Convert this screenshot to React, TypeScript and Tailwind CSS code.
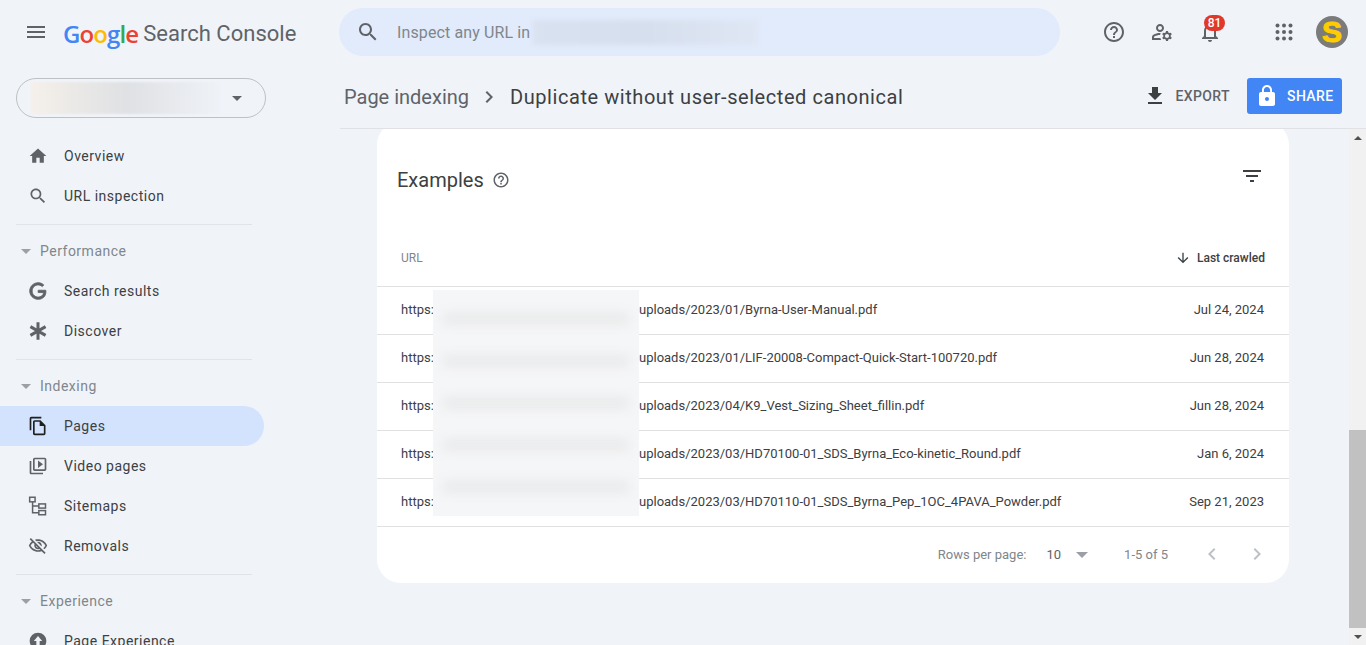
import React from "react";

const P = {
  menu: "M3 18h18v-2H3v2zm0-5h18v-2H3v2zm0-7v2h18V6H3z",
  home: "M10 20v-6h4v6h5v-8h3L12 3 2 12h3v8z",
  search: "M15.5 14h-.79l-.28-.27C15.41 12.59 16 11.11 16 9.5 16 5.91 13.09 3 9.5 3S3 5.91 3 9.5 5.91 16 9.5 16c1.61 0 3.09-.59 4.23-1.57l.27.28v.79l5 4.99L20.49 19l-4.99-5zm-6 0C7.01 14 5 11.99 5 9.5S7.01 5 9.5 5 14 7.01 14 9.5 11.99 14 9.5 14z",
  help: "M11 18h2v-2h-2v2zm1-16C6.48 2 2 6.48 2 12s4.48 10 10 10 10-4.48 10-10S17.52 2 12 2zm0 18c-4.41 0-8-3.59-8-8s3.59-8 8-8 8 3.59 8 8-3.59 8-8 8zm0-14c-2.21 0-4 1.79-4 4h2c0-1.1.9-2 2-2s2 .9 2 2c0 2-3 1.75-3 5h2c0-2.25 3-2.5 3-5 0-2.21-1.79-4-4-4z",
  bell: "M12 22c1.1 0 2-.9 2-2h-4c0 1.1.9 2 2 2zm6-6v-5c0-3.07-1.63-5.64-4.5-6.32V4c0-.83-.67-1.5-1.5-1.5s-1.5.67-1.5 1.5v.68C7.64 5.36 6 7.92 6 11v5l-2 2v1h16v-1l-2-2zm-2 1H8v-6c0-2.48 1.51-4.5 4-4.5s4 2.02 4 4.5v6z",
  download: "M19 9h-4V3H9v6H5l7 7 7-7zM5 18v2h14v-2H5z",
  lock: "M18 8h-1V6c0-2.76-2.24-5-5-5S7 3.24 7 6v2H6c-1.1 0-2 .9-2 2v10c0 1.1.9 2 2 2h12c1.1 0 2-.9 2-2V10c0-1.1-.9-2-2-2zm-6 9c-1.1 0-2-.9-2-2s.9-2 2-2 2 .9 2 2-.9 2-2 2zm3.1-9H8.9V6c0-1.71 1.39-3.1 3.1-3.1 1.71 0 3.1 1.39 3.1 3.1v2z",
  filter: "M10 18h4v-2h-4v2zM3 6v2h18V6H3zm3 7h12v-2H6v2z",
  down: "M20 12l-1.41-1.41L13 16.17V4h-2v12.17l-5.58-5.59L4 12l8 8 8-8z",
  left: "M15.41 7.41L14 6l-6 6 6 6 1.41-1.41L10.83 12z",
  right: "M10 6L8.59 7.41 13.17 12l-4.58 4.59L10 18l6-6z",
  eyeOff: "M12 6c3.79 0 7.17 2.13 8.82 5.5-.59 1.22-1.42 2.27-2.41 3.12l1.41 1.41c1.39-1.23 2.49-2.77 3.18-4.53C21.27 7.11 17 4 12 4c-1.27 0-2.49.2-3.64.57l1.65 1.65C10.66 6.09 11.32 6 12 6zm-1.07 1.14L13 9.21c.57.25 1.03.71 1.28 1.28l2.07 2.07c.08-.34.14-.7.14-1.07C16.5 9.01 14.48 7 12 7c-.37 0-.72.05-1.07.14zM2.01 3.87l2.68 2.68C3.06 7.83 1.77 9.53 1 11.5 2.73 15.89 7 19 12 19c1.52 0 2.98-.29 4.32-.82l3.42 3.42 1.41-1.41L3.42 2.45 2.01 3.87zm7.5 7.5l2.61 2.61c-.04.01-.08.02-.12.02-1.38 0-2.5-1.12-2.5-2.5 0-.05.01-.08.01-.13zm-3.4-3.4l1.75 1.75c-.23.55-.36 1.15-.36 1.78 0 2.48 2.02 4.5 4.5 4.5.63 0 1.23-.13 1.77-.36l.98.98c-.88.24-1.8.38-2.75.38-3.79 0-7.17-2.13-8.82-5.5.7-1.43 1.72-2.61 2.93-3.53z",
  pages: "M16 1H4c-1.1 0-2 .9-2 2v14h2V3h12V1zm-1 4H8c-1.1 0-1.99.9-1.99 2L6 21c0 1.1.89 2 1.99 2H19c1.1 0 2-.9 2-2V11l-6-6zM8 21V7h6v5h5v9H8z",
  video: "M4 6H2v14c0 1.1.9 2 2 2h14v-2H4V6zm16-4H8c-1.1 0-2 .9-2 2v12c0 1.1.9 2 2 2h12c1.1 0 2-.9 2-2V4c0-1.1-.9-2-2-2zm0 14H8V4h12v12zM12 5.5v9l6-4.5z",
  g: "M21.35 11.1h-9.17v2.73h6.51c-.33 3.81-3.5 5.44-6.5 5.44C8.36 19.27 5 16.25 5 12c0-4.1 3.2-7.27 7.2-7.27 3.09 0 4.9 1.97 4.9 1.97L19 4.72S16.56 2 12.1 2C6.42 2 2.03 6.8 2.03 12c0 5.05 4.13 10 10.22 10 5.35 0 9.25-3.67 9.25-9.09 0-1.15-.15-1.81-.15-1.81z",
  manage: "M4 18v-.65c0-.34.16-.66.41-.81C6.1 15.53 8.03 15 10 15c.03 0 .05 0 .08.01.1-.7.3-1.37.59-1.98-.22-.02-.44-.03-.67-.03-2.42 0-4.68.67-6.61 1.82-.88.52-1.39 1.5-1.39 2.53V20h9.26c-.42-.6-.75-1.28-.97-2H4zM10 12c2.21 0 4-1.79 4-4s-1.79-4-4-4-4 1.79-4 4 1.79 4 4 4zm0-6c1.1 0 2 .9 2 2s-.9 2-2 2-2-.9-2-2 .9-2 2-2zM20.75 16c0-.22-.03-.42-.06-.63l1.14-1.01-1-1.73-1.45.49c-.32-.27-.68-.48-1.08-.63L18 11h-2l-.3 1.49c-.4.15-.76.36-1.08.63l-1.45-.49-1 1.73 1.14 1.01c-.03.21-.06.41-.06.63s.03.42.06.63l-1.14 1.01 1 1.73 1.45-.49c.32.27.68.48 1.08.63L16 21h2l.3-1.49c.4-.15.76-.36 1.08-.63l1.45.49 1-1.73-1.14-1.01c.03-.21.06-.41.06-.63zM17 18c-1.1 0-2-.9-2-2s.9-2 2-2 2 .9 2 2-.9 2-2 2z",
};

function I({ d, className, bold }: { d: string; className: string; bold?: boolean }) {
  return (
    <svg viewBox="0 0 24 24" className={className} fill="currentColor" stroke={bold ? "currentColor" : "none"} strokeWidth={bold ? 1 : 0}>
      <path d={d} fillRule="evenodd" />
    </svg>
  );
}

function Sitemap() {
  return (
    <svg viewBox="0 0 24 24" className="w-[20px] h-[20px] text-[#5f6368]" fill="none" stroke="currentColor" strokeWidth="1.8">
      <rect x="2" y="1.5" width="6.5" height="5.5" />
      <rect x="13" y="9.5" width="8" height="5" />
      <rect x="13" y="17.5" width="8" height="5" />
      <path d="M5.5 7v13h7.5M5.5 12h7.5" />
    </svg>
  );
}

function Asterisk() {
  return (
    <svg viewBox="0 0 24 24" className="w-[20px] h-[20px] text-[#5f6368]" fill="none" stroke="currentColor" strokeWidth="3.6">
      <path d="M12 1.5v21M2.9 6.75l18.2 10.5M21.1 6.75 2.9 17.25" />
    </svg>
  );
}

function Exp() {
  return (
    <svg viewBox="0 0 24 24" className="w-[20px] h-[20px] text-[#5f6368]" fill="currentColor">
      <path fillRule="evenodd" d="M12 2a10 10 0 1 0 0 20 10 10 0 0 0 0-20zm0 4 5 6h-3v5h-4v-5H7z" />
    </svg>
  );
}

function Caret({ className }: { className: string }) {
  return <span className={"w-0 h-0 border-x-[5px] border-x-transparent border-t-[5px] " + className} />;
}

function NavItem({ icon, label, active }: { icon: React.ReactNode; label: string; active?: boolean }) {
  return (
    <div className={"h-[40px] w-[264px] flex items-center rounded-r-[20px] " + (active ? "bg-[#d3e3fd]" : "")}>
      <div className="w-[64px] pl-[28px] flex items-center">{icon}</div>
      <span className="text-[14px] tracking-[0.5px] text-[#3c4043]">{label}</span>
    </div>
  );
}

function Section({ label }: { label: string }) {
  return (
    <div className="h-[40px] flex items-center pl-[21px] gap-[9px]">
      <Caret className="border-t-[#9aa0a6]" />
      <span className="text-[14px] tracking-[0.5px] text-[#80868b]">{label}</span>
    </div>
  );
}

function Divider() {
  return <div className="ml-[16px] w-[236px] h-px bg-[#e0e3e7] mt-[8px] mb-[6px]" />;
}

const rows = [
  ["uploads/2023/01/Byrna-User-Manual.pdf", "Jul 24, 2024"],
  ["uploads/2023/01/LIF-20008-Compact-Quick-Start-100720.pdf", "Jun 28, 2024"],
  ["uploads/2023/04/K9_Vest_Sizing_Sheet_fillin.pdf", "Jun 28, 2024"],
  ["uploads/2023/03/HD70100-01_SDS_Byrna_Eco-kinetic_Round.pdf", "Jan 6, 2024"],
  ["uploads/2023/03/HD70110-01_SDS_Byrna_Pep_1OC_4PAVA_Powder.pdf", "Sep 21, 2023"],
];

const iconCls = "w-[20px] h-[20px] text-[#5f6368]";

export default function App() {
  return (
    <div className="h-[645px] w-[1366px] overflow-hidden bg-[#f0f4f9] flex flex-col font-['Roboto',sans-serif] text-[#3c4043]">
      <header className="h-[64px] shrink-0 flex items-center">
        <div className="w-[339px] flex items-center pl-[24px]">
          <I d={P.menu} className="w-[24px] h-[24px] text-[#5f6368]" />
          <div className="ml-[15px] mt-[3px] flex items-center leading-none">
            <span className="text-[24px] font-['Open_Sans',sans-serif] font-semibold tracking-[-0.9px]">
              <span className="text-[#4285f4]">G</span>
              <span className="text-[#ea4335]">o</span>
              <span className="text-[#fbbc05]">o</span>
              <span className="text-[#4285f4]">g</span>
              <span className="text-[#34a853]">l</span>
              <span className="text-[#ea4335]">e</span>
            </span>
            <span className="ml-[5px] text-[#5f6368] text-[22px] tracking-[0.02px]">Search Console</span>
          </div>
        </div>
        <div className="w-[721px] h-[48px] rounded-[24px] bg-[#e1ebfb] flex items-center pl-[17px]">
          <I d={P.search} className="w-[24px] h-[24px] text-[#5f6368]" />
          <span className="ml-[17px] mt-[1px] text-[16px] tracking-[0.12px] text-[#80868b]">Inspect any URL in</span>
          <div className="ml-[3px] w-[225px] h-[25px] bg-linear-to-r from-[#d9e2f1] via-[#d6dfed] to-[#dfe7f5] blur-[2px]" />
        </div>
        <div className="flex-1 flex items-center">
          <I d={P.help} className="ml-[42px] w-[24px] h-[24px] text-[#5f6368]" />
          <I d={P.manage} className="ml-[24px] w-[24px] h-[24px] text-[#5f6368]" />
          <div className="ml-[24px] w-[24px] h-[24px] relative">
            <I d={P.bell} className="w-[24px] h-[24px] text-[#5f6368]" />
            <span className="absolute left-[6px] -top-[5px] h-[16px] w-[21px] rounded-full bg-[#e0392b] text-white text-[12px] leading-[16px] text-center font-medium">81</span>
          </div>
          <svg viewBox="0 0 18 18" className="ml-[53px] w-[18px] h-[18px] text-[#5f6368]" fill="currentColor">
            <circle cx="2.5" cy="2.5" r="2" /><circle cx="9" cy="2.5" r="2" /><circle cx="15.5" cy="2.5" r="2" />
            <circle cx="2.5" cy="9" r="2" /><circle cx="9" cy="9" r="2" /><circle cx="15.5" cy="9" r="2" />
            <circle cx="2.5" cy="15.5" r="2" /><circle cx="9" cy="15.5" r="2" /><circle cx="15.5" cy="15.5" r="2" />
          </svg>
          <div className="ml-[23px] w-[32px] h-[32px] rounded-full bg-[#7b7b7b] flex items-center justify-center">
            <span className="text-[#ffcc00] font-bold text-[30px] leading-none font-['Liberation_Sans',sans-serif] [-webkit-text-stroke:1px_#ffcc00]">S</span>
          </div>
        </div>
      </header>

      <div className="flex-1 flex min-h-0">
        <aside className="w-[340px] shrink-0 overflow-hidden">
          <div className="mt-[14px] ml-[16px] w-[250px] h-[40px] rounded-[20px] border border-[#bdc1c6] flex items-center relative">
            <div className="ml-[14px] w-[190px] h-[32px] bg-linear-to-r from-[#f5f0ea] via-[#dfe1e4] to-[#eff2f7] blur-[1px]" />
            <Caret className="absolute left-[215px] top-[17px] border-t-[#5f6368]" />
          </div>
          <div className="mt-[18px]">
            <NavItem label="Overview" icon={<I d={P.home} className={iconCls} />} />
            <NavItem label="URL inspection" icon={<I d={P.search} className={iconCls} />} />
            <Divider />
            <Section label="Performance" />
            <NavItem label="Search results" icon={<I d={P.g} bold className={iconCls} />} />
            <NavItem label="Discover" icon={<Asterisk />} />
            <Divider />
            <Section label="Indexing" />
            <NavItem active label="Pages" icon={<I d={P.pages} className="w-[20px] h-[20px] text-[#1f1f1f]" />} />
            <NavItem label="Video pages" icon={<I d={P.video} className={iconCls} />} />
            <NavItem label="Sitemaps" icon={<Sitemap />} />
            <NavItem label="Removals" icon={<I d={P.eyeOff} className={iconCls} />} />
            <Divider />
            <Section label="Experience" />
            <NavItem label="Page Experience" icon={<Exp />} />
          </div>
        </aside>

        <main className="flex-1 min-w-0 flex flex-col">
          <div className="h-[65px] shrink-0 border-b border-[#dfe1e5] flex items-center pl-[4px] pr-[24px]">
            <span className="mt-[2px] text-[20px] text-[#5f6368]">Page indexing</span>
            <I d={P.right} className="ml-[8px] mt-[2px] w-[24px] h-[24px] text-[#5f6368]" />
            <span className="ml-[9px] mt-[2px] text-[20px] font-[450] tracking-[0.56px] text-[#3c4043]">Duplicate without user-selected canonical</span>
            <div className="ml-auto flex items-center">
              <I d={P.download} className="w-[24px] h-[24px] text-[#3c4043]" />
              <span className="ml-[8px] text-[14px] font-medium tracking-[0.4px] text-[#5f6368]">EXPORT</span>
              <div className="ml-[17px] w-[95px] h-[36px] rounded-[3px] bg-[#4285f4] flex items-center pl-[8px]">
                <I d={P.lock} className="w-[24px] h-[24px] text-white" />
                <span className="ml-[8px] text-[14px] font-medium tracking-[0.4px] text-white">SHARE</span>
              </div>
            </div>
          </div>

          <div className="flex-1 flex min-h-0">
            <div className="flex-1 min-w-0 overflow-hidden pl-[37px] pr-[60px]">
              <section className="-mt-[8px] bg-white rounded-[24px] h-[462px] flex flex-col">
                <div className="h-[109px] shrink-0 pt-[8px] flex items-center pl-[20px] pr-[25px]">
                  <span className="text-[20px] text-[#3c4043]">Examples</span>
                  <I d={P.help} className="ml-[8px] w-[18px] h-[18px] text-[#5f6368]" />
                  <I d={P.filter} className="ml-auto -mt-[7px] w-[24px] h-[24px] text-[#3c4043]" />
                </div>
                <div className="relative">
                  <div className="h-[57px] flex items-center px-[24px] border-b border-[#e0e0e0]">
                    <span className="text-[12px] text-[#80868b]">URL</span>
                    <I d={P.down} className="ml-auto w-[16px] h-[16px] text-[#3c4043]" />
                    <span className="ml-[6px] text-[12px] font-medium text-[#3c4043]">Last crawled</span>
                  </div>
                  {rows.map(([u, d]) => (
                    <div key={u} className="h-[48px] flex items-center pl-[24px] pr-[25px] pb-[2px] border-b border-[#e0e0e0] text-[13px] text-[#3c4043]">
                      <span className="w-[238px] shrink-0">https:</span>
                      <span>{u}</span>
                      <span className="ml-auto">{d}</span>
                    </div>
                  ))}
                  <div className="absolute left-[56px] top-[60px] w-[206px] h-[226px] bg-[#f5f6f7] flex flex-col justify-around py-[8px] px-[10px]">
                    {rows.map(([u]) => (
                      <div key={u} className="h-[14px] bg-[#ebeced] blur-[5px]" />
                    ))}
                  </div>
                </div>
                <div className="flex-1 flex items-center justify-end pr-[20px] text-[13px] text-[#80868b]">
                  <span>Rows per page:</span>
                  <span className="ml-[20px] text-[#5f6368]">10</span>
                  <Caret className="ml-[15px] border-x-[6px] border-t-[6px] border-t-[#9aa0a6]" />
                  <span className="ml-[36px]">1-5 of 5</span>
                  <I d={P.left} className="ml-[32px] -mt-[2px] w-[24px] h-[24px] text-[#bdc1c6]" />
                  <I d={P.right} className="ml-[21px] -mt-[2px] w-[24px] h-[24px] text-[#bdc1c6]" />
                </div>
              </section>
            </div>
            <div className="w-[17px] shrink-0 bg-[#f1f1f1] flex flex-col">
              <div className="h-[17px] flex items-center justify-center"><span className="w-0 h-0 border-x-[4px] border-x-transparent border-b-[4px] border-b-[#505050]" /></div>
              <div className="flex-1" />
              <div className="h-[198px] bg-[#c1c1c1]" />
              <div className="h-[17px] flex items-center justify-center"><span className="w-0 h-0 border-x-[4px] border-x-transparent border-t-[4px] border-t-[#505050]" /></div>
            </div>
          </div>
        </main>
      </div>
    </div>
  );
}
